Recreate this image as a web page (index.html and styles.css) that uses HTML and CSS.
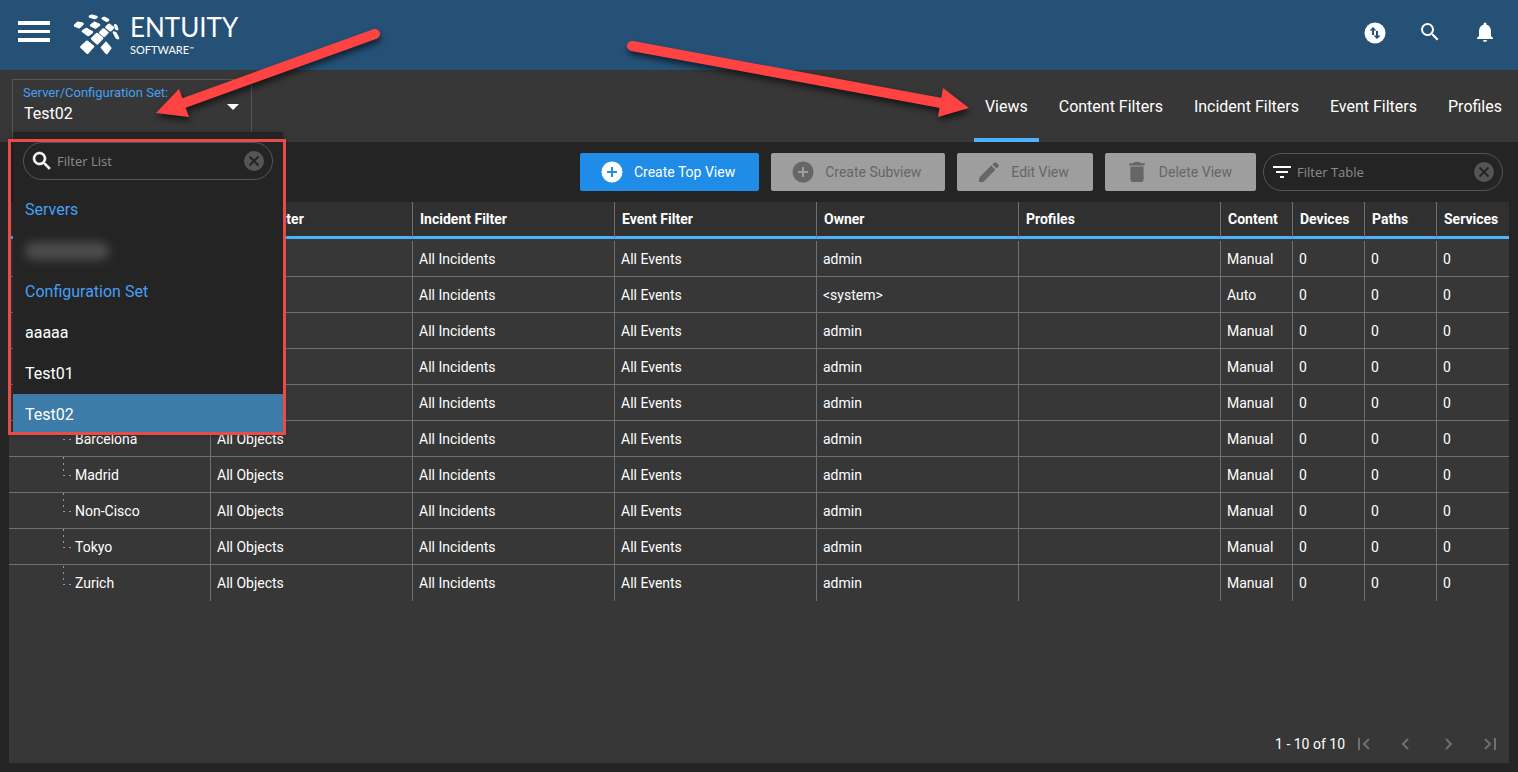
FILE: index.html
```html
<!DOCTYPE html>
<html lang="en">

<head>
    <meta charset="utf-8">
    <title>Entuity - Views</title>
    <link rel="stylesheet" href="styles.css">
</head>

<body>
    <header class="topbar">
        <button class="icon-btn menu-btn" aria-label="Menu">
            <svg width="32" height="22" viewBox="0 0 32 22"><path fill="#fff" d="M0 0h32v4H0zM0 9h32v3H0zM0 17h32v4H0z"/></svg>
        </button>
        <a class="logo" href="#">
            <svg width="48" height="42" viewBox="0 0 48 42" fill="#fff" stroke="#fff" stroke-linejoin="round" stroke-width="2.600">
                <path d="M16 2.500l2-.800 4.500 1.300-2 1zM28.800 4.500l1.500-.500 3.700 2-1.500.700zM1 11.500l3-2.700 4.500 1-3.200 3.400zM17.200 11.300l3.500-2.400 4.300 2-3.600 2.600zM9 17.200l3.500-2.200 5.300 3.200-3.600 2.800zM26.300 18.500l3.200-3 3.800 3.200-3.200 3.200zM32.500 13.300l2.700-2.500 3.800 2.900-2.700 2.500zM41.200 11.300l.8.500 1.200 3.300-.8-.300zM18.200 24.700l4.800-4.700 5 4.300-4.800 5zM40 18.500l1.500.900 2.500 4.800-1.500-.900zM7.500 33l5.500-5.200 6 4.700-5.500 6.200zM28 33.500l4-4.500 4.200 5-3.600 5z"/>
            </svg>
            <span class="logo-text">
                <span class="logo-name">ENTUITY</span>
                <span class="logo-sub">SOFTWARE<sup>™</sup></span>
            </span>
        </a>
        <div class="top-icons">
            <button class="icon-btn" aria-label="Transfers">
                <svg width="24" height="24" viewBox="0 0 24 24"><circle cx="12" cy="13" r="10.500" fill="#fff"/><path fill="#265176" d="M10 7l3.500 3.500H11V15H9v-4.500H6.500zM14 19l-3.500-3.500H13V11h2v4.500h2.500z"/></svg>
            </button>
            <button class="icon-btn" aria-label="Search">
                <svg width="24" height="24" viewBox="0 0 24 24"><path fill="#fff" d="M15.500 14h-.790l-.280-.270A6.470 6.470 0 0 0 16 9.500 6.500 6.500 0 1 0 9.500 16c1.610 0 3.090-.590 4.230-1.570l.270.280v.790l5 4.990L20.490 19zM9.500 14a4.500 4.500 0 1 1 0-9 4.500 4.500 0 0 1 0 9z"/></svg>
            </button>
            <button class="icon-btn" aria-label="Notifications">
                <svg width="24" height="24" viewBox="0 0 24 24"><path fill="#fff" d="M12 22c1.100 0 2-.900 2-2h-4c0 1.100.900 2 2 2zm6-6v-5c0-3.070-1.630-5.640-4.500-6.320V4a1.500 1.500 0 0 0-3 0v.680C7.640 5.360 6 7.920 6 11v5l-2 2v1h16v-1z"/></svg>
            </button>
        </div>
    </header>

    <div class="subbar">
        <div class="picker">
            <div class="picker-box">
                <label for="config-set">Server/Configuration Set:</label>
                <select id="config-set">
                    <option>aaaaa</option>
                    <option>Test01</option>
                    <option selected>Test02</option>
                </select>
                <svg class="caret" width="12" height="6" viewBox="0 0 12 6"><path fill="#fff" d="M0 0h12L6 6z"/></svg>
            </div>
            <div class="dropdown">
                <div class="search-box">
                    <svg width="24" height="24" viewBox="0 0 24 24"><path fill="#fff" stroke="#fff" stroke-width=".600" d="M15.500 14h-.790l-.280-.270A6.470 6.470 0 0 0 16 9.500 6.500 6.500 0 1 0 9.500 16c1.610 0 3.090-.590 4.230-1.570l.270.280v.790l5 4.990L20.490 19zM9.500 14a4.500 4.500 0 1 1 0-9 4.500 4.500 0 0 1 0 9z"/></svg>
                    <input type="text" placeholder="Filter List" aria-label="Filter List">
                    <button class="icon-btn" aria-label="Clear list filter">
                        <svg width="20" height="20" viewBox="0 0 20 20"><circle cx="10" cy="10" r="10" fill="#555"/><path stroke="#242424" stroke-width="2" d="M5.500 5.500l9 9M14.500 5.500l-9 9"/></svg>
                    </button>
                </div>
                <div class="option-list">
                    <h2>Servers</h2>
                    <button class="option"><span class="redacted"></span></button>
                    <h2>Configuration Set</h2>
                    <button class="option">aaaaa</button>
                    <button class="option">Test01</button>
                    <button class="option selected">Test02</button>
                </div>
                <div class="highlight"></div>
            </div>
        </div>
        <nav class="tabs">
            <a class="active" href="#">Views</a>
            <a href="#">Content Filters</a>
            <a href="#">Incident Filters</a>
            <a href="#">Event Filters</a>
            <a href="#">Profiles</a>
        </nav>
    </div>

    <div class="toolbar">
        <button class="btn primary">
            <svg width="22" height="22" viewBox="0 0 22 22"><circle cx="11" cy="11" r="10.500" fill="currentColor"/><path class="cut" d="M11 6v10M6 11h10"/></svg>
            Create Top View
        </button>
        <button class="btn" disabled>
            <svg width="22" height="22" viewBox="0 0 22 22"><circle cx="11" cy="11" r="10.500" fill="currentColor"/><path class="cut" d="M11 6v10M6 11h10"/></svg>
            Create Subview
        </button>
        <button class="btn" disabled>
            <svg width="22" height="22" viewBox="2 2 20 20"><path fill="currentColor" d="M3 17.250V21h3.750L17.810 9.940l-3.750-3.750zM20.710 7.040a1 1 0 0 0 0-1.410l-2.340-2.340a1 1 0 0 0-1.410 0l-1.830 1.830 3.750 3.750z"/></svg>
            Edit View
        </button>
        <button class="btn" disabled>
            <svg width="22" height="22" viewBox="2 2 20 20"><path fill="currentColor" d="M6 19c0 1.100.900 2 2 2h8c1.100 0 2-.900 2-2V7H6zM19 4h-3.500l-1-1h-5l-1 1H5v2h14z"/></svg>
            Delete View
        </button>
        <div class="search-box">
            <svg width="24" height="24" viewBox="0 0 24 24"><path fill="#fff" d="M3 6h18v2H3zM6 11h12v2H6zM10 16h4v2h-4z"/></svg>
            <input type="text" placeholder="Filter Table" aria-label="Filter Table">
            <button class="icon-btn" aria-label="Clear table filter">
                <svg width="20" height="20" viewBox="0 0 20 20"><circle cx="10" cy="10" r="10" fill="#555"/><path stroke="#242424" stroke-width="2" d="M5.500 5.500l9 9M14.500 5.500l-9 9"/></svg>
            </button>
        </div>
    </div>

    <main class="panel">
        <table>
            <colgroup>
                <col span="6">
                <col class="narrow" span="4">
            </colgroup>
            <thead>
                <tr>
                    <th></th>
                    <th>Content Filter</th>
                    <th>Incident Filter</th>
                    <th>Event Filter</th>
                    <th>Owner</th>
                    <th>Profiles</th>
                    <th>Content</th>
                    <th>Devices</th>
                    <th>Paths</th>
                    <th>Services</th>
                </tr>
            </thead>
            <tbody>
                <tr><td></td><td></td><td>All Incidents</td><td>All Events</td><td>admin</td><td></td><td>Manual</td><td>0</td><td>0</td><td>0</td></tr>
                <tr><td></td><td></td><td>All Incidents</td><td>All Events</td><td>&lt;system&gt;</td><td></td><td>Auto</td><td>0</td><td>0</td><td>0</td></tr>
                <tr><td></td><td></td><td>All Incidents</td><td>All Events</td><td>admin</td><td></td><td>Manual</td><td>0</td><td>0</td><td>0</td></tr>
                <tr><td></td><td></td><td>All Incidents</td><td>All Events</td><td>admin</td><td></td><td>Manual</td><td>0</td><td>0</td><td>0</td></tr>
                <tr><td></td><td></td><td>All Incidents</td><td>All Events</td><td>admin</td><td></td><td>Manual</td><td>0</td><td>0</td><td>0</td></tr>
                <tr><td><div class="node">Barcelona</div></td><td>All Objects</td><td>All Incidents</td><td>All Events</td><td>admin</td><td></td><td>Manual</td><td>0</td><td>0</td><td>0</td></tr>
                <tr><td><div class="node">Madrid</div></td><td>All Objects</td><td>All Incidents</td><td>All Events</td><td>admin</td><td></td><td>Manual</td><td>0</td><td>0</td><td>0</td></tr>
                <tr><td><div class="node">Non-Cisco</div></td><td>All Objects</td><td>All Incidents</td><td>All Events</td><td>admin</td><td></td><td>Manual</td><td>0</td><td>0</td><td>0</td></tr>
                <tr><td><div class="node">Tokyo</div></td><td>All Objects</td><td>All Incidents</td><td>All Events</td><td>admin</td><td></td><td>Manual</td><td>0</td><td>0</td><td>0</td></tr>
                <tr><td><div class="node">Zurich</div></td><td>All Objects</td><td>All Incidents</td><td>All Events</td><td>admin</td><td></td><td>Manual</td><td>0</td><td>0</td><td>0</td></tr>
            </tbody>
        </table>
        <div class="pager">
            <span>1 - 10 of 10</span>
            <button class="icon-btn" aria-label="First page" disabled><svg width="14" height="14" viewBox="0 0 14 14"><path d="M2 1v12M12 2L7 7l5 5"/></svg></button>
            <button class="icon-btn" aria-label="Previous page" disabled><svg width="14" height="14" viewBox="0 0 14 14"><path d="M9 2L4 7l5 5"/></svg></button>
            <button class="icon-btn" aria-label="Next page" disabled><svg width="14" height="14" viewBox="0 0 14 14"><path d="M5 2l5 5-5 5"/></svg></button>
            <button class="icon-btn" aria-label="Last page" disabled><svg width="14" height="14" viewBox="0 0 14 14"><path d="M12 1v12M2 2l5 5-5 5"/></svg></button>
        </div>
    </main>

    <!-- callout arrows -->
    <svg class="arrow arrow-picker" width="240" height="110" viewBox="150 20 240 110">
        <path class="shaft" d="M184 103L375 34"/>
        <path class="head" d="M156 113L179 89L189 117z"/>
    </svg>
    <svg class="arrow arrow-tab" width="360" height="110" viewBox="620 30 360 110">
        <path class="shaft" d="M632 46L941 103"/>
        <path class="head" d="M969 108L943 88L938 117z"/>
    </svg>
</body>

</html>
```
FILE: styles.css
```css
* {
    box-sizing: border-box;
}

body {
    position: relative;
    display: flex;
    flex-direction: column;
    min-height: 100vh;
    margin: 0;
    background: #242424;
    color: #fff;
    font-family: Roboto, "Liberation Sans", sans-serif;
    font-size: 14px;
}

button,
input,
select {
    font: inherit;
    color: inherit;
}

a {
    color: inherit;
    text-decoration: none;
}

svg {
    display: block;
}

.icon-btn {
    padding: 0;
    border: 0;
    background: none;
}

/* top bar */
.topbar {
    display: flex;
    align-items: center;
    height: 70px;
    padding: 0 21px 0 18px;
    background: #265176;
}

.menu-btn,
.top-icons {
    padding-bottom: 6px;
}

.logo {
    display: flex;
    align-items: center;
    gap: 8px;
    margin-left: 24px;
}

.logo-text {
    display: flex;
    flex-direction: column;
    padding-bottom: 2px;
    font-family: Lato, sans-serif;
}

.logo-name {
    font-size: 26px;
    line-height: 31px;
}

.logo-sub {
    font-size: 11px;
    line-height: 13px;
}

.logo-sub sup {
    font-size: 6px;
    line-height: 6px;
    vertical-align: 3px;
}

.top-icons {
    display: flex;
    gap: 31px;
    margin-left: auto;
}

/* server picker and tabs */
.subbar {
    display: flex;
    justify-content: space-between;
    height: 72px;
    padding: 0 5px 0 12px;
    background: #373737;
}

.picker {
    position: relative;
    width: 240px;
    padding-top: 9px;
}

.picker-box {
    position: relative;
    height: 63px;
    padding: 5px 10px;
    border: 1px solid #555;
}

.picker-box label {
    display: block;
    color: #45a0f5;
    font-size: 13px;
    line-height: 16px;
}

.picker-box select {
    width: 100%;
    height: 24px;
    padding: 0 1px;
    border: 0;
    background: none;
    font-size: 16px;
    appearance: none;
}

.caret {
    position: absolute;
    top: 24px;
    right: 12px;
    pointer-events: none;
}

.dropdown {
    position: absolute;
    z-index: 2;
    top: 62px;
    left: 1px;
    width: 270px;
    padding-top: 10px;
    background: #242424;
    box-shadow: 0 2px 6px rgba(0, 0, 0, .4);
}

.highlight {
    position: absolute;
    top: 7px;
    right: -3px;
    bottom: -3px;
    left: -5px;
    border: 3px solid #ea4b46;
    pointer-events: none;
}

.dropdown .search-box {
    margin: 0 10px 9px;
}

.option-list {
    max-height: 243px;
    overflow: hidden;
}

.dropdown h2,
.option {
    display: flex;
    align-items: center;
    width: 100%;
    height: 41px;
    margin: 0;
    padding: 0 12px;
    border: 0;
    background: none;
    font-size: 16px;
    font-weight: normal;
}

.dropdown h2 {
    color: #45a0f5;
}

.option.selected {
    background: #3d7ba8;
}

.redacted {
    width: 84px;
    height: 18px;
    border-radius: 8px;
    background: #4c4c4c;
    filter: blur(5px);
}

.tabs {
    display: flex;
    gap: 9px;
}

.tabs a {
    padding: 0 11px;
    border-bottom: 4px solid transparent;
    font-size: 16px;
    line-height: 74px;
}

.tabs a.active {
    border-color: #4db2ff;
}

/* toolbar */
.toolbar {
    display: flex;
    align-items: center;
    justify-content: flex-end;
    gap: 12px;
    height: 60px;
    padding-right: 15px;
}

.btn {
    display: flex;
    align-items: center;
    gap: 11px;
    height: 38px;
    padding: 0 24px 0 21px;
    border: 0;
    border-radius: 2px;
    background: #9e9e9e;
    color: #666;
}

.btn .cut {
    fill: none;
    stroke: #9e9e9e;
    stroke-width: 2;
}

.btn.primary {
    background: #1f8ce8;
    color: #fff;
}

.btn.primary .cut {
    stroke: #1f8ce8;
}

.search-box {
    display: flex;
    align-items: center;
    height: 38px;
    padding: 0 8px 0 6px;
    border: 1px solid #555;
    border-radius: 19px;
}

.toolbar .search-box {
    width: 240px;
    margin-left: -5px;
}

.search-box input {
    flex: 1;
    min-width: 0;
    padding: 0 3px;
    border: 0;
    outline: 0;
    background: none;
    font-family: "Open Sans", sans-serif;
    font-size: 13px;
}

.search-box input::placeholder {
    color: #8c8c8c;
}

/* table */
.panel {
    display: flex;
    flex: 1;
    flex-direction: column;
    margin: 0 9px 9px;
    background: #373737;
}

table {
    width: 100%;
    table-layout: fixed;
    border-spacing: 0;
}

.narrow {
    width: 72px;
}

th {
    height: 37px;
    padding: 0 7px;
    border-right: 1px solid #707070;
    border-bottom: 3px solid #4db2ff;
    background: #303030;
    text-align: left;
    white-space: nowrap;
}

tbody::before {
    content: "";
    display: block;
    height: 2px;
}

td {
    height: 36px;
    padding: 0 6px;
    border-right: 1px solid #707070;
    border-bottom: 1px solid #707070;
}

th:last-child,
td:last-child {
    border-right: 0;
}

tr:last-child td {
    border-bottom: 0;
}

.node {
    display: flex;
    align-items: center;
    height: 35px;
    padding-left: 48px;
}

/* dotted branch in front of a tree node */
.node::before {
    content: "";
    align-self: flex-start;
    width: 8px;
    height: 19px;
    margin-right: 4px;
    background:
        repeating-linear-gradient(#999 0 2px, transparent 2px 6px) 0 0 / 1px 100% no-repeat,
        repeating-linear-gradient(90deg, #999 0 2px, transparent 2px 6px) 0 100% / 100% 1px no-repeat;
}

.pager {
    display: flex;
    align-items: center;
    gap: 28px;
    height: 38px;
    margin-top: auto;
    padding-right: 12px;
    justify-content: flex-end;
}

.pager span {
    margin-right: -16px;
}

.pager path {
    fill: none;
    stroke: #707070;
    stroke-width: 2;
}

/* callouts */
.arrow {
    position: absolute;
    z-index: 3;
    filter: drop-shadow(1px 4px 3px rgba(0, 0, 0, .6));
    pointer-events: none;
}

.arrow .shaft {
    stroke: #ff4343;
    stroke-width: 10;
    stroke-linecap: round;
}

.arrow .head {
    fill: #ff4343;
}

.arrow-picker {
    top: 20px;
    left: 150px;
}

.arrow-tab {
    top: 30px;
    right: 538px;
}
```
